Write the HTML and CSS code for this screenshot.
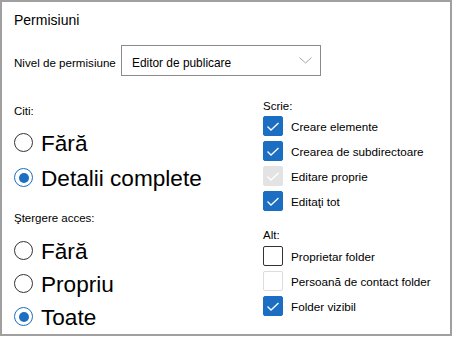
FILE: index.html
```html
<!DOCTYPE html>
<html lang="ro">
<head>
    <meta charset="UTF-8">
    <meta name="viewport" content="width=device-width, initial-scale=1.0">
    <title>Permisiuni</title>
    <link rel="stylesheet" href="styles.css">
</head>
<body>
    <div class="panel">
        <h1 class="title">Permisiuni</h1>

        <div class="level-row">
            <span class="level-label">Nivel de permisiune</span>
            <div class="select">
                <span class="select-text">Editor de publicare</span>
                <svg class="chevron" width="13" height="7" viewBox="0 0 13 7">
                    <path d="M0.5 0.5 L6.5 6 L12.5 0.5" fill="none" stroke="#a6a6a6" stroke-width="1"/>
                </svg>
            </div>
        </div>

        <div class="columns">
            <div class="col-left">
                <div class="group-label read-label">Citi:</div>
                <div class="radios">
                    <div class="radio-row"><span class="radio"></span><span class="radio-text">Fără</span></div>
                    <div class="radio-row"><span class="radio checked"></span><span class="radio-text">Detalii complete</span></div>
                </div>

                <div class="group-label delete-label">Ştergere acces:</div>
                <div class="radios tight">
                    <div class="radio-row"><span class="radio"></span><span class="radio-text">Fără</span></div>
                    <div class="radio-row"><span class="radio"></span><span class="radio-text">Propriu</span></div>
                    <div class="radio-row"><span class="radio checked"></span><span class="radio-text">Toate</span></div>
                </div>
            </div>

            <div class="col-right">
                <div class="group-label">Scrie:</div>
                <div class="checks">
                    <div class="check-row">
                        <span class="box checked"><svg width="20" height="20" viewBox="0 0 20 20"><path d="M4.5 10.5 L8 14 L15.5 7" fill="none" stroke="#fff" stroke-width="1.3"/></svg></span>
                        <span class="check-text">Creare elemente</span>
                    </div>
                    <div class="check-row">
                        <span class="box checked"><svg width="20" height="20" viewBox="0 0 20 20"><path d="M4.5 10.5 L8 14 L15.5 7" fill="none" stroke="#fff" stroke-width="1.3"/></svg></span>
                        <span class="check-text">Crearea de subdirectoare</span>
                    </div>
                    <div class="check-row">
                        <span class="box checked disabled"><svg width="20" height="20" viewBox="0 0 20 20"><path d="M4.5 10.5 L8 14 L15.5 7" fill="none" stroke="#fff" stroke-width="1.3"/></svg></span>
                        <span class="check-text">Editare proprie</span>
                    </div>
                    <div class="check-row">
                        <span class="box checked"><svg width="20" height="20" viewBox="0 0 20 20"><path d="M4.5 10.5 L8 14 L15.5 7" fill="none" stroke="#fff" stroke-width="1.3"/></svg></span>
                        <span class="check-text">Editaţi tot</span>
                    </div>
                </div>

                <div class="group-label other-label">Alt:</div>
                <div class="checks other-checks">
                    <div class="check-row">
                        <span class="box"></span>
                        <span class="check-text">Proprietar folder</span>
                    </div>
                    <div class="check-row">
                        <span class="box disabled"></span>
                        <span class="check-text">Persoană de contact folder</span>
                    </div>
                    <div class="check-row">
                        <span class="box checked"><svg width="20" height="20" viewBox="0 0 20 20"><path d="M4.5 10.5 L8 14 L15.5 7" fill="none" stroke="#fff" stroke-width="1.3"/></svg></span>
                        <span class="check-text">Folder vizibil</span>
                    </div>
                </div>
            </div>
        </div>
    </div>
</body>
</html>
```

FILE: styles.css
```css
body {
    margin: 0;
    background-color: #fff;
    font-family: "Liberation Sans", Arial, sans-serif;
    color: #000;
}
.panel {
    width: 452px;
    height: 336px;
    box-sizing: border-box;
    border: 2px solid #a0a0a0;
    padding: 9px 12px 0 12px;
}
.title {
    margin: 0;
    font-size: 14px;
    font-weight: normal;
    line-height: 18px;
}
.level-row {
    display: flex;
    align-items: center;
    margin-top: 16px;
    height: 31px;
}
.level-label {
    width: 107px;
    font-size: 11.6px;
    line-height: 14px;
    padding-top: 5px;
}
.select {
    width: 200px;
    height: 31px;
    box-sizing: border-box;
    border: 1px solid #8a8a8a;
    display: flex;
    align-items: center;
    justify-content: space-between;
    padding: 0 8px 0 10px;
}
.select-text {
    font-size: 11.9px;
    line-height: 14px;
    padding-top: 5px;
}
.chevron {
    display: block;
}
.columns {
    display: grid;
    grid-template-columns: 249px 1fr;
    margin-top: 23px;
}
.group-label {
    font-size: 11.5px;
    line-height: 14px;
}
.read-label {
    margin-top: 5px;
}
.radios {
    margin-top: 7px;
}
.radio-row {
    display: flex;
    align-items: center;
    height: 35px;
}
.radios.tight {
    margin-top: 9px;
}
.radios.tight .radio-row {
    height: 33px;
}
.delete-label {
    margin-top: 16px;
}
.radio {
    width: 19px;
    height: 19px;
    box-sizing: border-box;
    border: 1px solid #333;
    border-radius: 50%;
    margin-right: 8px;
    display: flex;
    align-items: center;
    justify-content: center;
}
.radio.checked {
    border-color: #1b6ec2;
}
.radio.checked::after {
    content: "";
    width: 10px;
    height: 10px;
    border-radius: 50%;
    background-color: #1b6ec2;
}
.radio-text {
    font-size: 22.6px;
    line-height: 26px;
    padding-top: 3px;
}
.check-row {
    display: flex;
    align-items: center;
    height: 25px;
}
.box {
    width: 20px;
    height: 20px;
    box-sizing: border-box;
    border: 1px solid #333;
    border-radius: 2px;
    margin-right: 8px;
}
.box svg {
    display: block;
    margin: -1px;
}
.box.checked {
    background-color: #1b6ec2;
    border-color: #1b6ec2;
}
.box.disabled {
    border-color: #dcdcdc;
}
.box.checked.disabled {
    background-color: #e3e3e3;
    border-color: #e3e3e3;
}
.check-text {
    font-size: 11.7px;
    line-height: 14px;
    padding-top: 3px;
}
.other-label {
    margin-top: 15px;
}
.other-checks {
    margin-top: 1px;
}
```
